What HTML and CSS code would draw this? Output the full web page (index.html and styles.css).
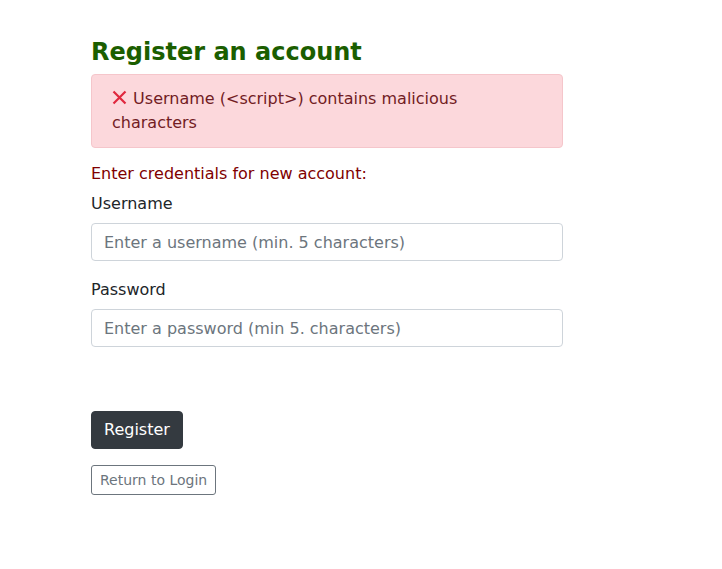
FILE: index.html
```html
<!DOCTYPE html>
<html lang="en">
<head>
<meta charset="utf-8">
<title>Register an account</title>
<link rel="stylesheet" href="styles.css">
</head>
<body>
<main class="page">
  <h1 class="title">Register an account</h1>
  <div class="alert">
    <svg class="x-icon" width="15" height="15" viewBox="0 0 15 15" aria-hidden="true"><path d="M1.5 1.5 L13.5 13.5 M13.5 1.5 L1.5 13.5" stroke="#e0283e" stroke-width="2.2" stroke-linecap="butt" fill="none"/></svg>
    Username (&lt;script&gt;) contains malicious characters
  </div>
  <form class="form">
    <p class="intro">Enter credentials for new account:</p>
    <div class="group">
      <label class="label" for="u">Username</label>
      <input class="input" id="u" type="text" placeholder="Enter a username (min. 5 characters)">
    </div>
    <div class="group">
      <label class="label" for="p">Password</label>
      <input class="input" id="p" type="password" placeholder="Enter a password (min 5. characters)">
    </div>
    <div class="actions">
      <button class="btn btn-dark" type="button">Register</button>
      <button class="btn btn-outline" type="button">Return to Login</button>
    </div>
  </form>
</main>
</body>
</html>
```
FILE: styles.css
```css
* { box-sizing: border-box; }
html, body { margin: 0; padding: 0; background: #fff; }
body {
  font-family: "DejaVu Sans", "Liberation Sans", sans-serif;
  font-size: 16px;
  line-height: 1.5;
  color: #212529;
}
.page {
  width: 472px;
  margin-left: 91px;
  padding-top: 38px;
}
.title {
  margin: 0 0 7px 0;
  font-size: 24px;
  line-height: 1.2;
  font-weight: bold;
  color: #1b5e00;
}
.alert {
  background: #fcd8dc;
  border: 1px solid #f5c6cb;
  color: #721c24;
  border-radius: 4px;
  padding: 12px 20px;
  margin-bottom: 14px;
}
.x-icon { vertical-align: -1px; margin-right: 1px; }
.form { margin: 0; }
.intro { margin: 0 0 6px 0; color: #800000; }
.group { margin-bottom: 17px; }
.label { display: block; margin-bottom: 7px; }
.input {
  display: block;
  width: 100%;
  height: 38px;
  padding: 7px 12px 5px;
  font-family: inherit;
  font-size: 16px;
  line-height: 1.5;
  color: #495057;
  background: #fff;
  border: 1px solid #ced4da;
  border-radius: 4px;
}
.input::placeholder { color: #6c757d; opacity: 1; }
.actions {
  display: flex;
  flex-direction: column;
  align-items: flex-start;
  gap: 16px;
  padding-top: 47px;
}
.btn {
  font-family: inherit;
  border-radius: 4px;
  cursor: pointer;
}
.btn-dark {
  height: 38px;
  padding: 6px 12px;
  font-size: 16px;
  line-height: 1.5;
  background: #343a40;
  border: 1px solid #343a40;
  color: #fff;
}
.btn-outline {
  height: 30px;
  padding: 4px 8px;
  font-size: 14px;
  line-height: 1.5;
  background: #fff;
  border: 1px solid #6c757d;
  color: #6c757d;
  border-radius: 3px;
}
```
